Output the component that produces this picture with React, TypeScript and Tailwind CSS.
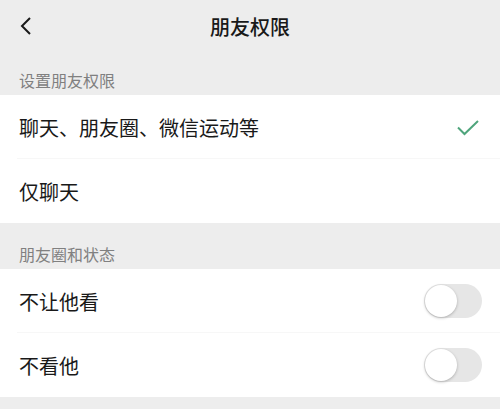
import React from "react";

const font = { fontFamily: '"Noto Sans CJK SC", "Noto Sans", sans-serif' };

function Toggle() {
  return (
    <div className="w-[58px] h-[34px] rounded-full bg-[#e6e6e6] p-[1px] flex items-center">
      <div className="w-[32px] h-[32px] rounded-full bg-white shadow-[0_1px_3px_rgba(0,0,0,0.25)]" />
    </div>
  );
}

function Row({ label, right, divider }: { label: string; right?: React.ReactNode; divider?: boolean }) {
  return (
    <div className="relative h-[64px] flex items-center justify-between pl-[19px] pr-[18px]">
      <span className="text-[20px] text-[#191919] leading-none pt-[2px]">{label}</span>
      {right}
      {divider && <div className="absolute left-[17px] right-0 bottom-0 h-px bg-[#f7f7f7]" />}
    </div>
  );
}

export default function App() {
  return (
    <div className="w-[500px] h-[409px] bg-[#ededed] overflow-hidden" style={font}>
      <div className="relative h-[56px] flex items-center justify-center">
        <svg className="absolute left-[17px] top-[15px]" width="18" height="22" viewBox="0 0 18 22">
          <path d="M13 3 L5 11 L13 19" fill="none" stroke="#191919" strokeWidth="2" />
        </svg>
        <span className="text-[20px] font-medium text-[#191919] pb-[2px]">朋友权限</span>
      </div>
      <div className="h-[39px] px-[19px] pt-[13px] text-[16px] leading-[22px] text-[#808080]">设置朋友权限</div>
      <div className="bg-white">
        <Row
          label="聊天、朋友圈、微信运动等"
          divider
          right={
            <svg width="24" height="18" viewBox="0 0 24 18" className="mr-[2px] mt-[2px]">
              <path d="M2 8.5 L8.5 15 L22 2" fill="none" stroke="#4fa57c" strokeWidth="2" />
            </svg>
          }
        />
        <Row label="仅聊天" />
      </div>
      <div className="h-[46px] px-[19px] pt-[20px] text-[16px] leading-[22px] text-[#808080]">朋友圈和状态</div>
      <div className="bg-white">
        <Row label="不让他看" divider right={<Toggle />} />
        <Row label="不看他" right={<Toggle />} />
      </div>
    </div>
  );
}
